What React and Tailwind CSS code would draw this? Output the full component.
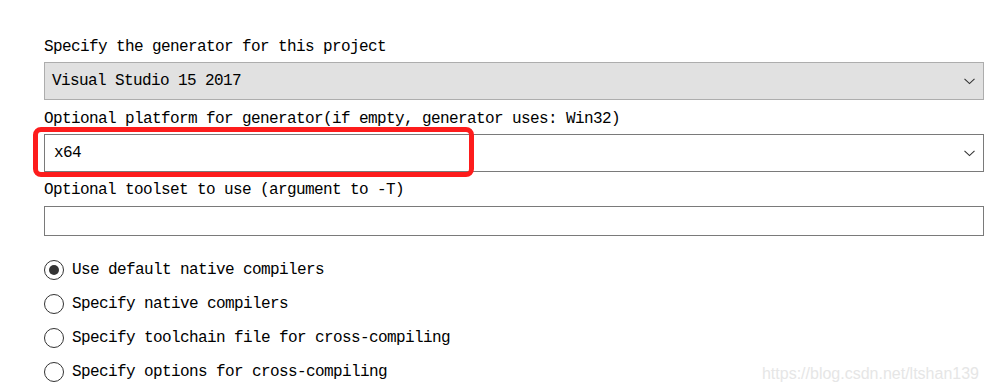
import React from "react";

const mono = { fontFamily: '"Liberation Mono", "DejaVu Sans Mono", monospace' };

function Chevron() {
  return (
    <svg width="11" height="7" viewBox="0 0 11 7" className="shrink-0">
      <path d="M0.5 0.8 L5.5 5.6 L10.5 0.8" fill="none" stroke="#333" strokeWidth="1.1" />
    </svg>
  );
}

function Radio({ checked, label }) {
  return (
    <div className="flex items-center h-[34px]">
      <div className="w-[20px] h-[20px] rounded-full border border-[#333] bg-white flex items-center justify-center">
        {checked && <div className="w-[10px] h-[10px] rounded-full bg-[#333]" />}
      </div>
      <span className="ml-[8px]">{label}</span>
    </div>
  );
}

export default function App() {
  return (
    <div className="relative w-[988px] h-[392px] bg-white overflow-hidden" style={mono}>
      <div className="flex flex-col pl-[44px] pr-[4px] pt-[35px] text-[16px] tracking-[-0.6px] text-black">
        <div className="h-[22px] leading-[22px] pt-[1px]">Specify the generator for this project</div>
        <div className="mt-[5px] h-[38px] bg-[#e1e1e1] border border-[#adadad] flex items-center pl-[7px] pr-[8px] justify-between">
          <span>Visual Studio 15 2017</span>
          <Chevron />
        </div>
        <div className="mt-[7px] h-[22px] leading-[22px] pt-[1px]">Optional platform for generator(if empty, generator uses: Win32)</div>
        <div className="mt-[5px] h-[38px] bg-white border border-[#7a7a7a] flex items-center pl-[9px] pr-[8px] justify-between">
          <span>x64</span>
          <Chevron />
        </div>
        <div className="mt-[6px] h-[22px] leading-[22px] pt-[1px]">Optional toolset to use (argument to -T)</div>
        <div className="mt-[6px] h-[30px] bg-white border border-[#7a7a7a]" />
        <div className="mt-[17px] flex flex-col">
          <Radio checked label="Use default native compilers" />
          <Radio label="Specify native compilers" />
          <Radio label="Specify toolchain file for cross-compiling" />
          <Radio label="Specify options for cross-compiling" />
        </div>
      </div>
      <div className="absolute left-[33px] top-[127px] w-[441px] h-[50px] border-[5px] border-[#fd1c1c] rounded-[8px]" />
      <div
        className="absolute right-[9px] top-[362px] text-[16px] text-[#e6e6e6]"
        style={{ fontFamily: '"Liberation Sans", Arial, sans-serif' }}
      >
        https://blog.csdn.net/ltshan139
      </div>
    </div>
  );
}
